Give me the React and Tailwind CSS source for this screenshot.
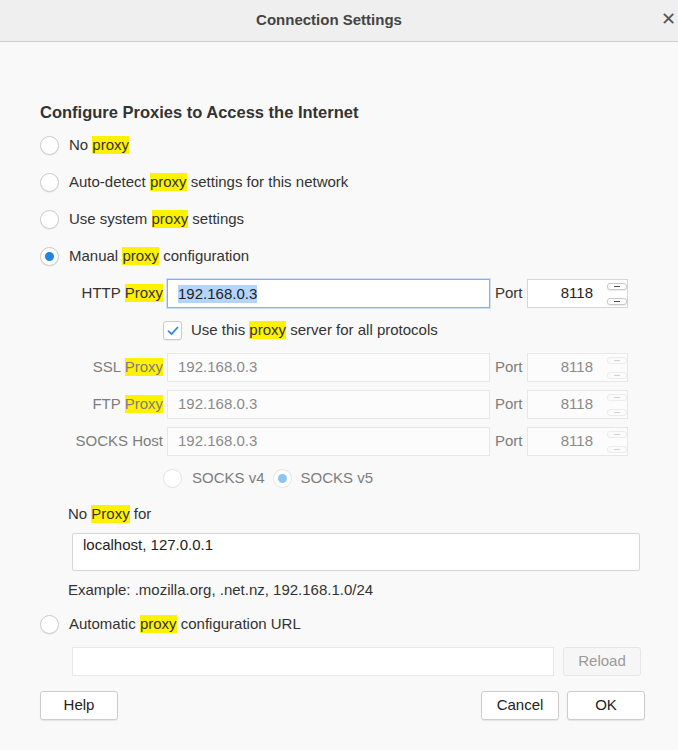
import React from 'react';

function Hl({ children }) {
  return <span className="bg-[#fff200] inline-block leading-[18px]">{children}</span>;
}

function Radio({ checked, disabled }) {
  return (
    <span
      className={`w-[19px] h-[19px] shrink-0 rounded-full border bg-white flex items-center justify-center ${
        disabled ? 'border-[#e4e4e4]' : 'border-[#cbcbcb] shadow-[0_1px_1px_rgba(0,0,0,0.06)]'
      }`}
    >
      {checked && (
        <span className={`w-[9px] h-[9px] rounded-full ${disabled ? 'bg-[#8ec5ee]' : 'bg-[#1d86e3]'}`} />
      )}
    </span>
  );
}

function Spinner({ disabled }) {
  const btn = disabled
    ? 'border-[#ececec] bg-[#fbfbfb]'
    : 'border-[#c9c9c9] bg-white shadow-[0_1px_1px_rgba(0,0,0,0.08)]';
  const dash = disabled ? 'bg-[#d0d0d0]' : 'bg-[#555]';
  return (
    <div className="flex flex-col gap-[8px] ml-[14px]">
      <span className={`w-[20px] h-[7px] rounded-[3px] border flex items-center justify-center ${btn}`}>
        <span className={`w-[6px] h-px ${dash}`} />
      </span>
      <span className={`w-[20px] h-[7px] rounded-[3px] border flex items-center justify-center ${btn}`}>
        <span className={`w-[6px] h-px ${dash}`} />
      </span>
    </div>
  );
}

function ProxyRow({ label, hl, value, disabled, focused }) {
  const tone = disabled ? 'text-[#7d7d7d]' : 'text-[#333]';
  return (
    <div className="h-[37px] flex items-center">
      <div className={`w-[123px] text-right ${tone}`}>
        {label} {hl && <Hl>{hl}</Hl>}
      </div>
      <div
        className={`ml-[4px] w-[323px] h-[29px] flex items-center pl-[10px] border ${
          focused
            ? 'bg-white border-[#7fb2ef] shadow-[0_0_0_1px_rgba(127,178,239,0.35)] text-[#222]'
            : 'bg-[#fcfcfc] border-[#e7e7e7] text-[#8a8a8a]'
        }`}
      >
        {focused ? <span className="bg-[#b4d4fb] leading-[18px]">{value}</span> : value}
      </div>
      <span className={`ml-[5px] w-[27px] ${tone}`}>Port</span>
      <div
        className={`ml-[5px] w-[101px] h-[29px] flex items-center border ${
          disabled ? 'bg-[#fcfcfc] border-[#e7e7e7] text-[#8a8a8a]' : 'bg-white border-[#d6d6d6] text-[#222]'
        }`}
      >
        <span className="w-[65px] text-right">8118</span>
        <Spinner disabled={disabled} />
      </div>
    </div>
  );
}

function Button({ children, disabled, className = '' }) {
  return (
    <div
      className={`h-[29px] flex items-center justify-center rounded-[3px] border ${
        disabled
          ? 'bg-[#f6f6f6] border-[#e6e6e6] text-[#9a9a9a]'
          : 'bg-white border-[#cdcdcd] text-[#222] shadow-[0_1px_1px_rgba(0,0,0,0.08)]'
      } ${className}`}
    >
      {children}
    </div>
  );
}

export default function App() {
  return (
    <div className="w-[678px] h-[750px] bg-[#f9f9f9] text-[15px] text-[#333] font-['Liberation_Sans',Arial,sans-serif] overflow-hidden">
      {/* Title bar */}
      <div className="h-[42px] bg-[#efefef] border-b border-[#d0d0d0] flex items-center relative">
        <div className="flex-1 text-center pr-[20px] font-bold text-[15px] text-[#444]">Connection Settings</div>
        <span className="absolute right-[2px] top-[10px] text-[18px] text-[#555] leading-none">✕</span>
      </div>

      <div className="pl-[40px] pt-[55px]">
        <div className="h-[30px] leading-[30px] text-[16.5px] font-bold text-[#333]">
          Configure Proxies to Access the Internet
        </div>

        {[
          ['No ', '', false],
          ['Auto-detect ', ' settings for this network', false],
          ['Use system ', ' settings', false],
          ['Manual ', ' configuration', true],
        ].map(([a, b, checked]) => (
          <div key={a} className="h-[37px] flex items-center">
            <Radio checked={checked} />
            <span className="ml-[10px]">
              {a}
              <Hl>proxy</Hl>
              {b}
            </span>
          </div>
        ))}

        <ProxyRow label="HTTP" hl="Proxy" value="192.168.0.3" focused />

        <div className="h-[37px] flex items-center pl-[123px]">
          <span className="w-[19px] h-[19px] rounded-[3px] border border-[#cbcbcb] bg-white flex items-center justify-center shadow-[0_1px_1px_rgba(0,0,0,0.06)]">
            <svg width="12" height="10" viewBox="0 0 12 10">
              <path d="M1.5 5.2 L4.5 8.2 L10.5 1.5" fill="none" stroke="#2f8ae3" strokeWidth="1.8" strokeLinecap="round" strokeLinejoin="round" />
            </svg>
          </span>
          <span className="ml-[9px]">
            Use this <Hl>proxy</Hl> server for all protocols
          </span>
        </div>

        <ProxyRow label="SSL" hl="Proxy" value="192.168.0.3" disabled />
        <ProxyRow label="FTP" hl="Proxy" value="192.168.0.3" disabled />
        <ProxyRow label="SOCKS Host" value="192.168.0.3" disabled />

        <div className="h-[37px] flex items-center pl-[123px] text-[#7d7d7d]">
          <Radio disabled />
          <span className="ml-[10px]">SOCKS v4</span>
          <span className="ml-[8px]">
            <Radio checked disabled />
          </span>
          <span className="ml-[9px]">SOCKS v5</span>
        </div>

        <div className="h-[34px] flex items-center pl-[28px]">
          <span>
            No <Hl>Proxy</Hl> for
          </span>
        </div>
        <div className="ml-[32px] mt-[2px] w-[568px] h-[38px] bg-white border border-[#d6d6d6] rounded-[2px] pl-[10px] text-[#222]">
          localhost, 127.0.0.1
        </div>
        <div className="h-[39px] flex items-center pl-[28px]">Example: .mozilla.org, .net.nz, 192.168.1.0/24</div>

        <div className="h-[28px] flex items-center">
          <Radio />
          <span className="ml-[10px]">
            Automatic <Hl>proxy</Hl> configuration URL
          </span>
        </div>

        <div className="mt-[9px] flex items-center pl-[32px]">
          <div className="w-[482px] h-[29px] bg-white border border-[#e7e7e7]" />
          <Button disabled className="ml-[9px] w-[78px]">Reload</Button>
        </div>

        <div className="mt-[15px] flex items-center">
          <Button className="w-[78px]">Help</Button>
          <Button className="ml-[363px] w-[78px]">Cancel</Button>
          <Button className="ml-[8px] w-[78px]">OK</Button>
        </div>
      </div>
    </div>
  );
}
